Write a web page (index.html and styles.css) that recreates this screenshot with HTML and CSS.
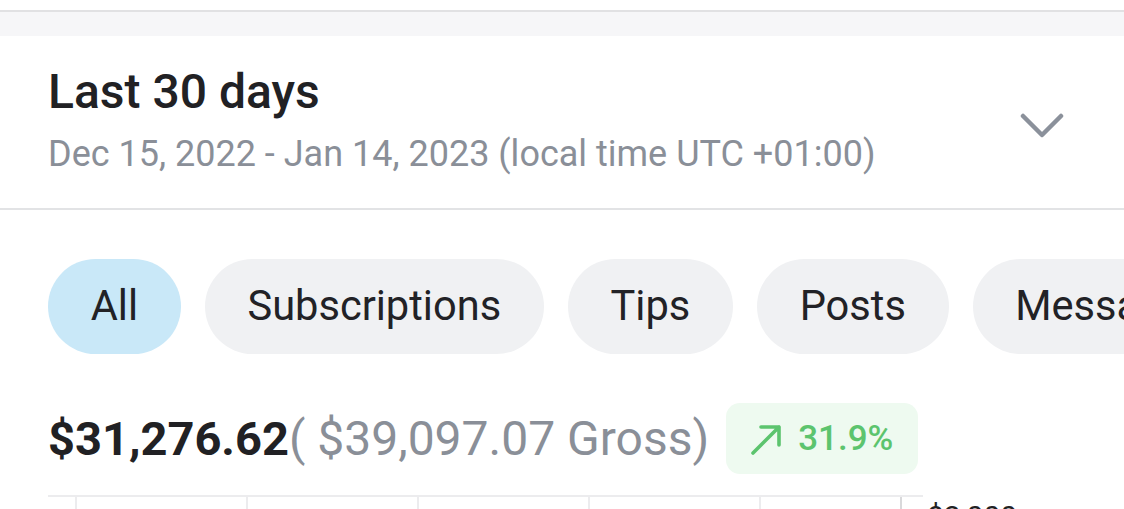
FILE: index.html
```html
<!DOCTYPE html>
<html>
<head>
<meta charset="utf-8">
<link rel="stylesheet" href="styles.css">
</head>
<body>
<div class="topbar"><div class="band"></div></div>
<section class="range">
  <div class="range-text">
    <div class="title">Last 30 days</div>
    <div class="subtitle">Dec 15, 2022 - Jan 14, 2023 (local time UTC +01:00)</div>
  </div>
  <svg class="chev" width="44" height="28" viewBox="0 0 44 28"><path d="M3 4 L22 23 L41 4" fill="none" stroke="#8b919b" stroke-width="4.5" stroke-linecap="round" stroke-linejoin="round"/></svg>
</section>
<div class="chips">
  <div class="chip active">All</div>
  <div class="chip">Subscriptions</div>
  <div class="chip">Tips</div>
  <div class="chip">Posts</div>
  <div class="chip">Messages</div>
</div>
<div class="totals">
  <span class="net">$31,276.62</span><span class="gross">( $39,097.07 Gross)</span>
  <div class="badge">
    <svg width="32" height="32" viewBox="0 0 32 32"><path d="M3 30 L29 4 M11 4 H29 V22" fill="none" stroke="#5cc46e" stroke-width="3.6" stroke-linecap="round" stroke-linejoin="round"/></svg>
    <span>31.9%</span>
  </div>
</div>
<div class="chart">
  <div class="grid">
    <div class="col"></div><div class="col"></div><div class="col"></div><div class="col"></div><div class="col short"></div><div class="col last"></div>
  </div>
  <div class="ylabel">$2,000</div>
</div>
</body>
</html>
```

FILE: styles.css
```css
html, body {
  margin: 0;
  padding: 0;
  background: #ffffff;
  font-family: Roboto, "Liberation Sans", sans-serif;
  overflow: hidden;
}
.topbar {
  padding-top: 10px;
}
.band {
  height: 24px;
  background: #f6f6f8;
  border-top: 2px solid #e1e1e3;
}
.range {
  display: flex;
  align-items: center;
  justify-content: space-between;
  padding: 28px 60px 33px 48px;
  border-bottom: 2px solid #e2e3e5;
}
.title {
  font-size: 48px;
  line-height: 56px;
  font-weight: 500;
  color: #212124;
}
.subtitle {
  margin-top: 13px;
  font-size: 36px;
  line-height: 42px;
  color: #8a8f98;
}
.chev {
  margin-top: 12px;
}
.chips {
  display: flex;
  gap: 24px;
  padding: 49px 0 0 48px;
  white-space: nowrap;
  overflow: hidden;
}
.chip {
  flex: none;
  height: 95px;
  line-height: 93px;
  padding: 0 42.7px;
  border-radius: 48px;
  background: #f0f1f3;
  color: #222226;
  font-size: 41.6px;
}
.chip.active {
  background: #c9e8f8;
}
.totals {
  display: flex;
  align-items: center;
  padding: 49px 0 0 48px;
  height: 71px;
}
.net {
  font-size: 47px;
  font-weight: 700;
  color: #212124;
}
.gross {
  font-size: 48px;
  color: #8a8f98;
}
.badge {
  display: flex;
  align-items: center;
  gap: 16px;
  margin-left: 17px;
  height: 71px;
  padding: 0 25px 0 24px;
  border-radius: 14px;
  background: #eefaf0;
  color: #5cc46e;
  font-size: 35px;
  font-weight: 500;
}
.chart {
  display: flex;
  padding: 21px 0 0 48px;
}
.grid {
  display: flex;
  width: 875px;
  height: 40px;
  border-top: 2px solid #ececee;
  padding-left: 27px;
  box-sizing: border-box;
}
.col {
  width: 171px;
  flex: none;
  border-left: 2px solid #ececee;
  box-sizing: border-box;
}
.col.short {
  width: 141px;
}
.col.last {
  width: 23px;
  border-left-color: #d9d9db;
}
.ylabel {
  margin-left: 4px;
  margin-top: 4px;
  font-size: 30px;
  color: #222;
}
```
